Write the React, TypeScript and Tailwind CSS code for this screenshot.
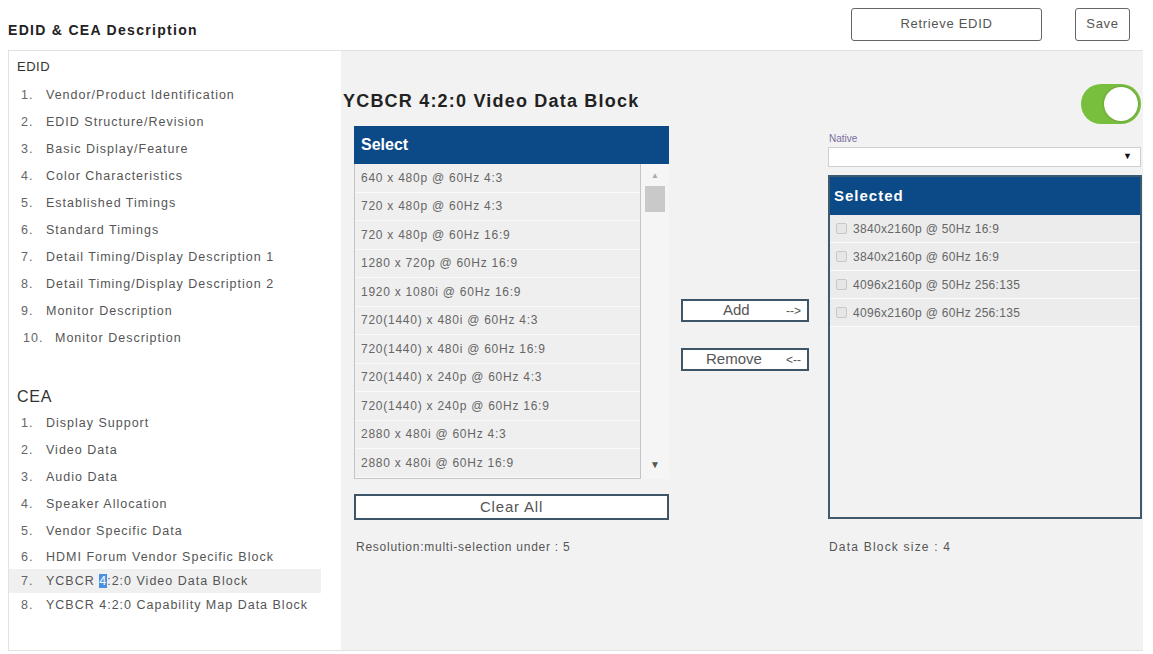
import * as React from "react"

const EDID_ITEMS = [
  "Vendor/Product Identification",
  "EDID Structure/Revision",
  "Basic Display/Feature",
  "Color Characteristics",
  "Established Timings",
  "Standard Timings",
  "Detail Timing/Display Description 1",
  "Detail Timing/Display Description 2",
  "Monitor Description",
  "Monitor Description",
]

const CEA_ITEMS = [
  "Display Support",
  "Video Data",
  "Audio Data",
  "Speaker Allocation",
  "Vendor Specific Data",
  "HDMI Forum Vendor Specific Block",
  "YCBCR 4:2:0 Video Data Block",
  "YCBCR 4:2:0 Capability Map Data Block",
]

const RESOLUTIONS = [
  "640 x 480p @ 60Hz 4:3",
  "720 x 480p @ 60Hz 4:3",
  "720 x 480p @ 60Hz 16:9",
  "1280 x 720p @ 60Hz 16:9",
  "1920 x 1080i @ 60Hz 16:9",
  "720(1440) x 480i @ 60Hz 4:3",
  "720(1440) x 480i @ 60Hz 16:9",
  "720(1440) x 240p @ 60Hz 4:3",
  "720(1440) x 240p @ 60Hz 16:9",
  "2880 x 480i @ 60Hz 4:3",
  "2880 x 480i @ 60Hz 16:9",
]

const SELECTED = [
  "3840x2160p @ 50Hz 16:9",
  "3840x2160p @ 60Hz 16:9",
  "4096x2160p @ 50Hz 256:135",
  "4096x2160p @ 60Hz 256:135",
]

function NavItem({
  n,
  label,
  active,
  tall,
}: {
  n: number
  label: string
  active?: boolean
  tall?: boolean
}) {
  return (
    <div
      className={
        "flex items-center pl-[12px] text-[12.5px] tracking-[1px] text-[#555] " +
        (tall ? "h-[27px] " : "h-[24px] ") +
        (active ? "bg-[#f0f0f0] mr-[20px]" : "")
      }
    >
      <span className={"shrink-0 text-[#666] " + (n > 9 ? "w-[34px] pl-[2px]" : "w-[25px]")}>{n}.</span>
      <span>
        {active ? (
          <>
            YCBCR <span className="bg-[#4a90e2] text-white">4</span>:2:0 Video Data Block
          </>
        ) : (
          label
        )}
      </span>
    </div>
  )
}

export default function App() {
  const [on, setOn] = React.useState(true)

  return (
    <div className="w-[1153px] h-[654px] bg-white font-['Liberation_Sans',Arial,sans-serif] text-[#333] overflow-hidden">
      {/* top bar */}
      <div className="flex items-center justify-between h-[50px] pl-[8px] pr-[23px]">
        <h1 className="text-[14px] font-bold tracking-[1.3px] text-[#222] mt-[10px]">EDID &amp; CEA Description</h1>
        <div className="flex items-center gap-[33px] -mt-[2px]">
          <button className="w-[191px] h-[33px] border-[1.5px] border-[#666] rounded-[3px] text-[13px] tracking-[0.7px] text-[#555] bg-white">
            Retrieve EDID
          </button>
          <button className="w-[55px] h-[33px] border-[1.5px] border-[#666] rounded-[3px] text-[13px] tracking-[0.7px] text-[#555] bg-white">
            Save
          </button>
        </div>
      </div>

      <div className="flex ml-[8px] mr-[10px] h-[601px] border-t border-l border-b border-[#e2e2e2]">
        {/* side nav */}
        <aside className="w-[332px] shrink-0 bg-white pt-[6px]">
          <div className="h-[20px] pl-[8px] flex items-center text-[13px] tracking-[0.5px] text-[#333]">EDID</div>
          <div className="mt-[5px] flex flex-col">
            {EDID_ITEMS.map((t, i) => (
              <NavItem key={i} n={i + 1} label={t} tall />
            ))}
          </div>
          <div className="mt-[35px] h-[20px] pl-[8px] flex items-center text-[16px] tracking-[0.8px] text-[#333]">CEA</div>
          <div className="mt-[3px] flex flex-col">
            {CEA_ITEMS.map((t, i) => (
              <NavItem key={i} n={i + 1} label={t} active={i === 6} tall={i < 5} />
            ))}
          </div>
        </aside>

        {/* main */}
        <main className="flex-1 bg-[#f2f2f2] flex pl-[2px]">
          {/* select column */}
          <section className="w-[328px] shrink-0 pt-[38px]">
            <h2 className="text-[18px] font-bold tracking-[1.2px] text-[#222] h-[24px] leading-[24px] whitespace-nowrap">
              YCBCR 4:2:0 Video Data Block
            </h2>
            <div className="ml-[11px] mt-[13px] w-[315px]">
              <div className="h-[38px] bg-[#0b4a86] text-white font-bold text-[16px] flex items-center pl-[7px]">
                Select
              </div>
              <div className="flex">
                <div className="w-[287px] border-l border-b border-r border-[#c5c5c5]">
                  {RESOLUTIONS.map((r) => (
                    <div
                      key={r}
                      className="h-[28.5px] flex items-center pl-[6px] text-[12px] tracking-[0.75px] text-[#666] bg-[#efefef] border-b border-[#fafafa]"
                    >
                      {r}
                    </div>
                  ))}
                </div>
                <div className="w-[28px] flex flex-col items-center bg-[#f5f5f5] pt-[6px] pb-[8px]">
                  <span className="text-[8px] text-[#aaa] leading-[12px]">▲</span>
                  <div className="mt-[4px] w-[20px] h-[26px] bg-[#c9c9c9]" />
                  <div className="flex-1" />
                  <span className="text-[10px] text-[#555] leading-[12px]">▼</span>
                </div>
              </div>
              <button className="mt-[15px] w-[315px] h-[26px] bg-white border-2 border-[#3d5566] text-[15px] tracking-[0.8px] text-[#555]">
                Clear All
              </button>
              <p className="mt-[18px] pl-[2px] text-[12px] tracking-[0.75px] text-[#555] whitespace-nowrap">
                Resolution:multi-selection under : 5
              </p>
            </div>
          </section>

          {/* add / remove */}
          <section className="w-[128px] shrink-0 ml-[10px] pt-[248px] flex flex-col gap-[26px]">
            <button className="h-[23px] bg-white border-2 border-[#3d5566] text-[15px] text-[#555] flex items-center justify-between pl-[40px] pr-[6px]">
              <span>Add</span>
              <span className="text-[12px]">--&gt;</span>
            </button>
            <button className="h-[23px] bg-white border-2 border-[#3d5566] text-[15px] text-[#555] flex items-center justify-between pl-[23px] pr-[6px]">
              <span>Remove</span>
              <span className="text-[12px]">&lt;--</span>
            </button>
          </section>

          {/* selected column */}
          <section className="w-[314px] shrink-0 ml-[19px] pt-[33px]">
            <div className="flex justify-end pr-[1px]">
              <button
                onClick={() => setOn(!on)}
                className={
                  "w-[60px] h-[40px] rounded-full p-[3px] flex " +
                  (on ? "bg-[#79bf3e] justify-end" : "bg-[#ccc] justify-start")
                }
              >
                <span className="w-[34px] h-[34px] rounded-full bg-white shadow-[0_0_3px_rgba(0,0,0,0.25)]" />
              </button>
            </div>
            <div className="mt-[9px] text-[10px] text-[#7a6e9c] pl-[1px] leading-[12px]">Native</div>
            <div className="mt-[2px] h-[20px] bg-white border border-[#cfcfcf] flex items-center justify-end pr-[8px] text-[9px] text-[#111] mr-[1px]">
              ▼
            </div>
            <div className="mt-[8px] h-[344px] border-2 border-[#3f5a6e] bg-[#f2f2f2]">
              <div className="h-[38px] bg-[#0b4a86] text-white font-bold text-[15px] tracking-[1px] flex items-center pl-[4px]">
                Selected
              </div>
              {SELECTED.map((s) => (
                <label
                  key={s}
                  className="h-[28px] flex items-center gap-[6px] pl-[6px] text-[12px] tracking-[0.3px] text-[#666] bg-[#ececec] border-b border-[#fafafa]"
                >
                  <span className="w-[11px] h-[11px] border border-[#c8c8c8] bg-[#e6e6e6] rounded-[2px]" />
                  {s}
                </label>
              ))}
            </div>
            <p className="mt-[19px] pl-[1px] text-[12px] tracking-[1.2px] text-[#555]">Data Block size : 4</p>
          </section>
        </main>
      </div>
    </div>
  )
}
